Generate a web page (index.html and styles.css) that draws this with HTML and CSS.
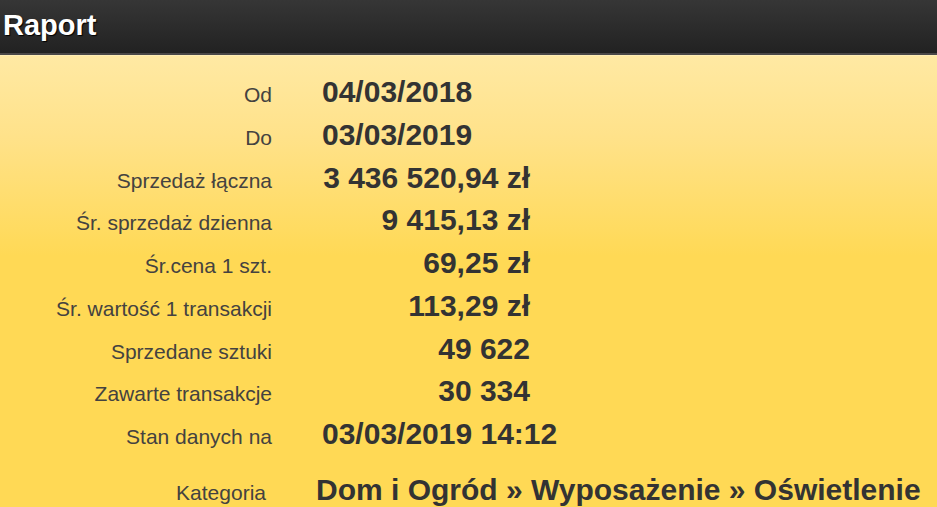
FILE: index.html
```html
<!DOCTYPE html>
<html lang="pl">
<head>
<meta charset="utf-8">
<title>Raport</title>
<link rel="stylesheet" href="styles.css">
</head>
<body>
<header class="topbar"><h1 class="title">Raport</h1></header>
<main class="panel">
  <div class="stats">
    <div class="label">Od</div><div class="value">04/03/2018</div>
    <div class="label">Do</div><div class="value">03/03/2019</div>
    <div class="label">Sprzedaż łączna</div><div class="value num">3 436 520,94 zł</div>
    <div class="label">Śr. sprzedaż dzienna</div><div class="value num">9 415,13 zł</div>
    <div class="label">Śr.cena 1 szt.</div><div class="value num">69,25 zł</div>
    <div class="label">Śr. wartość 1 transakcji</div><div class="value num">113,29 zł</div>
    <div class="label">Sprzedane sztuki</div><div class="value num">49 622</div>
    <div class="label">Zawarte transakcje</div><div class="value num">30 334</div>
    <div class="label">Stan danych na</div><div class="value">03/03/2019 14:12</div>
  </div>
  <div class="category">
    <div class="label cat-label">Kategoria</div>
    <div class="value cat-value">Dom i Ogród » Wyposażenie » Oświetlenie</div>
  </div>
</main>
</body>
</html>
```
FILE: styles.css
```css
html, body {
  margin: 0;
  padding: 0;
}
body {
  width: 937px;
  height: 507px;
  overflow: hidden;
  font-family: "Liberation Sans", Arial, sans-serif;
  background: #ffd955;
}
.topbar {
  height: 53px;
  background: linear-gradient(#363636, #222222);
  border-bottom: 2px solid #4a4848;
  display: flex;
  align-items: center;
}
.title {
  margin: 0 0 2px 3px;
  font-size: 29px;
  font-weight: bold;
  color: #ffffff;
  text-shadow: 1px 1px 1px #000;
}
.panel {
  height: 452px;
  background: linear-gradient(#ffe9a3 0px, #ffe28a 80px, #ffd955 200px, #ffd955 100%);
  border-top: 1px solid #ffeeb5;
  box-sizing: border-box;
  padding-top: 19px;
}
.stats {
  display: grid;
  grid-template-columns: 272px 208px;
  grid-auto-rows: 42.75px;
  column-gap: 50px;
  align-items: baseline;
}
.label {
  text-align: right;
  font-size: 21px;
  color: #444240;
  white-space: nowrap;
}
.value {
  font-size: 30px;
  font-weight: bold;
  color: #333333;
  white-space: nowrap;
}
.num {
  text-align: right;
}
.category {
  display: flex;
  align-items: baseline;
  gap: 50px;
  margin-top: 13px;
}
.cat-label {
  width: 266px;
  flex: none;
}
```
